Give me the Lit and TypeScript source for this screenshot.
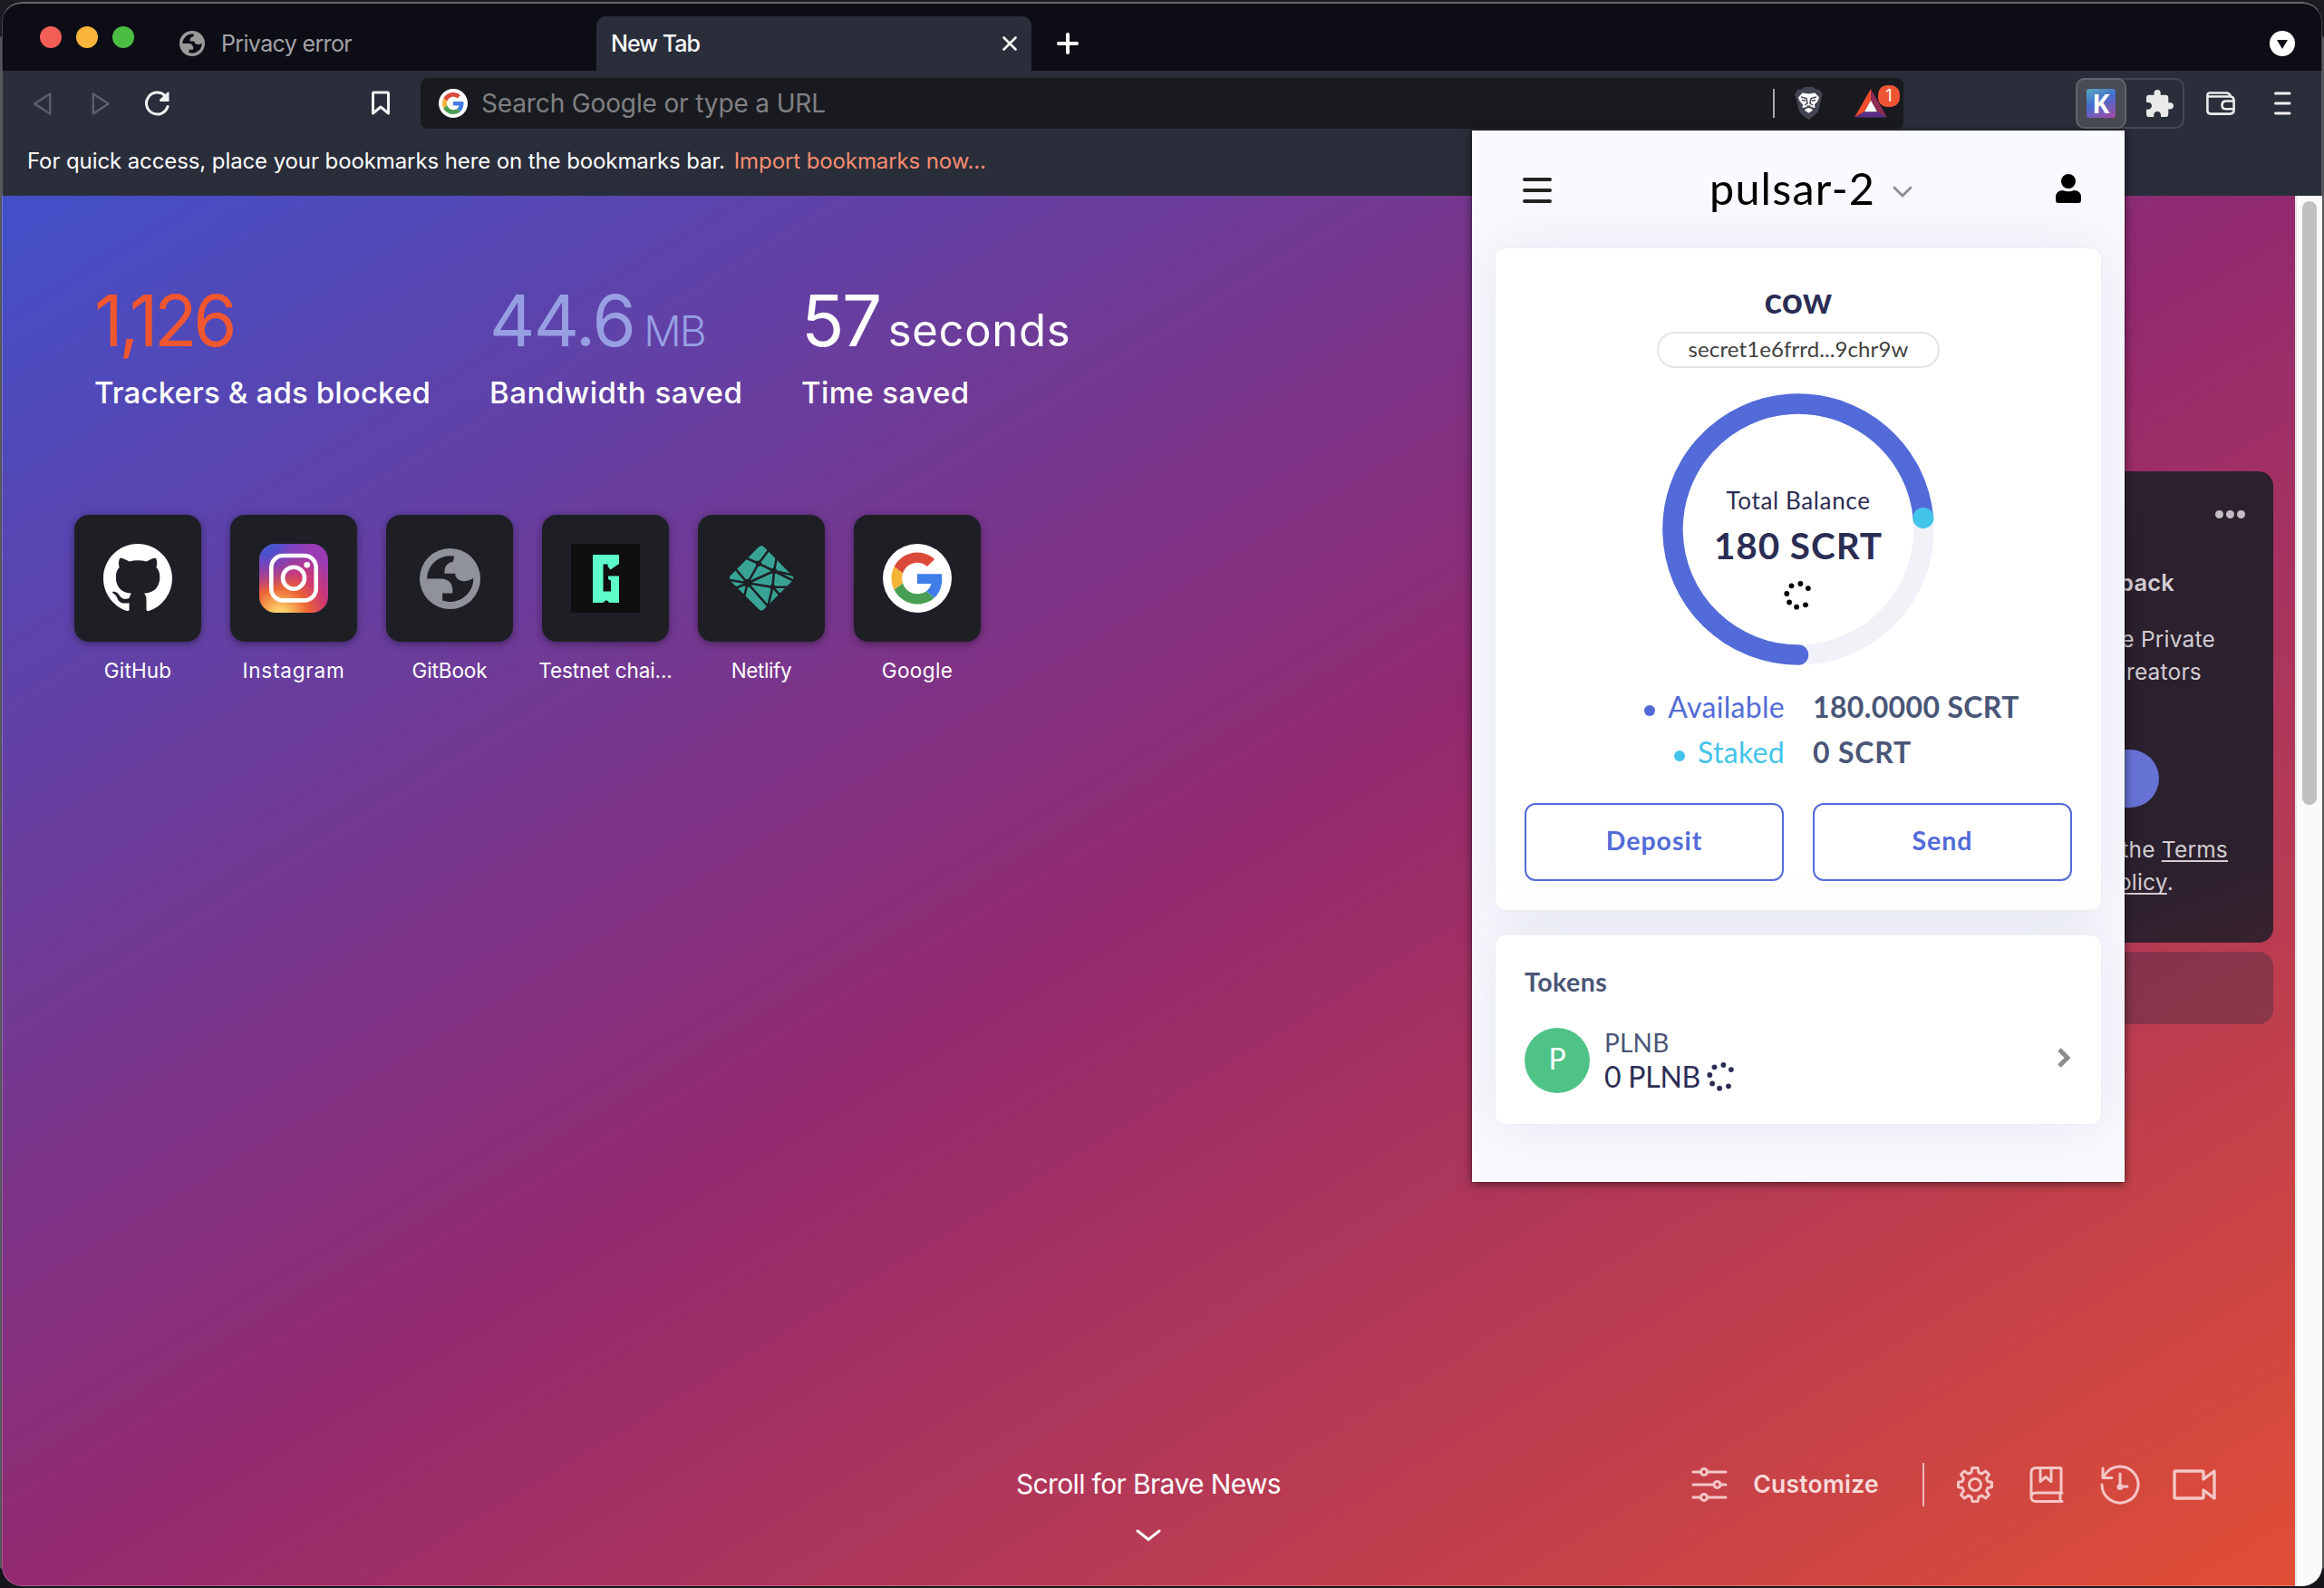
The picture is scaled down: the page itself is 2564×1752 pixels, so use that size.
import { LitElement, html, css, svg, nothing } from "lit";
import { customElement, property } from "lit/decorators.js";

const GITHUB =
  "M8 0C3.58 0 0 3.58 0 8c0 3.54 2.29 6.53 5.47 7.59.4.07.55-.17.55-.38 0-.19-.01-.82-.01-1.49-2.01.37-2.53-.49-2.69-.94-.09-.23-.48-.94-.82-1.13-.28-.15-.68-.52-.01-.53.63-.01 1.08.58 1.23.82.72 1.21 1.87.87 2.33.66.07-.52.28-.87.51-1.07-1.78-.2-3.64-.89-3.64-3.95 0-.87.31-1.59.82-2.15-.08-.2-.36-1.02.08-2.12 0 0 .67-.21 2.2.82.64-.18 1.32-.27 2-.27.68 0 1.36.09 2 .27 1.53-1.04 2.2-.82 2.2-.82.44 1.1.16 1.92.08 2.12.51.56.82 1.27.82 2.15 0 3.07-1.87 3.75-3.65 3.95.29.25.54.73.54 1.48 0 1.07-.01 1.93-.01 2.2 0 .21.15.46.55.38A8.013 8.013 0 0016 8c0-4.42-3.58-8-8-8z";

const globe = (size: number, fill: string) => html`<svg width=${size} height=${size} viewBox="0 0 200 200">
  <path fill=${fill} fill-rule="evenodd" d="M100 0a100 100 0 1 0 0 200a100 100 0 1 0 0-200z
    M24 100A76 76 0 0 1 114 26L110 44C95 45 82 58 82 74V83H117C117 98 130 108 147 108C160 108 170 103 177 98A77 77 0 0 1 75 172V148H108C112 120 98 100 70 100Z"/></svg>`;

const google = (size: number) => html`<svg width=${size} height=${size} viewBox="-8 -8 64 64">
  <circle cx="24" cy="24" r="32" fill="#fff"/>
  <path fill="#db4a39" d="M24 9.5c3.54 0 6.71 1.22 9.21 3.6l6.85-6.85C35.9 2.38 30.47 0 24 0 14.62 0 6.51 5.38 2.56 13.22l7.98 6.19C12.43 13.72 17.74 9.5 24 9.5z"/>
  <path fill="#3f7ee8" d="M46.98 24.55c0-1.57-.15-3.09-.38-4.55H24v9.02h12.94c-.58 2.96-2.26 5.48-4.78 7.18l7.73 6c4.51-4.18 7.09-10.36 7.09-17.65z"/>
  <path fill="#f5b433" d="M10.53 28.59c-.48-1.45-.76-2.99-.76-4.59s.27-3.14.76-4.59l-7.98-6.19C.92 16.46 0 20.12 0 24c0 3.88.92 7.54 2.56 10.78l7.97-6.19z"/>
  <path fill="#489f53" d="M24 48c6.48 0 11.93-2.13 15.89-5.81l-7.73-6c-2.15 1.45-4.92 2.3-8.16 2.3-6.26 0-11.57-4.22-13.47-9.91l-7.98 6.19C6.51 42.62 14.62 48 24 48z"/></svg>`;

const SPIN: [number, number][] = [[2.4, -13], [10.9, -7.9], [-12.7, -2], [-7.5, -10.7], [-9.9, 7.5], [-1.9, 12.7], [8, 10.3]];
const spinner = (fill: string) => html`<svg width="32" height="32" viewBox="-16 -16 32 32" fill=${fill}>
  ${SPIN.map(([x, y]) => svg`<circle cx=${x} cy=${y} r="2.9"/>`)}</svg>`;

const siteIcons: Record<string, unknown> = {
  github: html`<svg width="76" height="76" viewBox="0 0 16 16"><path fill="#fff" d=${GITHUB}/></svg>`,
  instagram: html`<svg width="76" height="76" viewBox="0 0 76 76">
    <defs>
      <radialGradient id="warm" cx=".3" cy="1.05" r="1"><stop offset="0" stop-color="#fddc78"/><stop offset=".12" stop-color="#fcc964"/><stop offset=".42" stop-color="#ee6335"/><stop offset=".68" stop-color="#cd3774"/><stop offset="1" stop-color="#9a3cb4"/></radialGradient>
      <radialGradient id="cool" cx="0.05" cy="-.05" r=".75"><stop offset="0" stop-color="#3867d6"/><stop offset=".3" stop-color="#4f4fcb"/><stop offset="1" stop-color="#8a3cbe" stop-opacity="0"/></radialGradient>
    </defs>
    <rect width="76" height="76" rx="18" fill="url(#warm)"/><rect width="76" height="76" rx="18" fill="url(#cool)"/>
    <g fill="none" stroke="#fff" stroke-width="4.6"><rect x="13.3" y="13" width="49.4" height="49.4" rx="13"/><circle cx="38" cy="37.7" r="12"/></g>
    <circle cx="52.7" cy="23.3" r="3.3" fill="#fff"/></svg>`,
  globe: globe(67, "#8f9399"),
  testnet: html`<svg width="76" height="76" viewBox="0 0 76 76"><rect width="76" height="76" fill="#0f0f10"/>
    <path fill="#5cfdc8" d="M24 12H53V22L43.4 28.5L40.6 25V22.5H35.5V52.5H44V40.5L41 39V35.5H53V65H42.5L39 62L35 65H24Z"/></svg>`,
  netlify: html`<svg width="76" height="76" viewBox="0 0 76 76"><path fill="#38a395" d="M38 2Q40 2 42 4.500L72 35Q74.500 38 72 41L41 72Q38 75 35 72L4 41Q1.500 38 4 35L34 4.500Q36 2 38 2Z"/>
    <g stroke="#1e1f25" stroke-width="2.600" fill="none"><path d="M22.8 43.3L34.900 21.700L52 30ZL50.400 47.700L52 30M34.900 21.700L22 16M34.900 21.700L46 7M52 30L55 14M52 30L76 35M50.400 47.700L70 47.700M50.400 47.700L45 70M50.400 47.700L60 58M22.800 43.300L0 39.500M22.800 43.300L8 26M22.800 43.300L48 72M22.800 43.300L7 50M22.800 43.300L18 62M52 30L76 42"/></g>
    <circle cx="22.800" cy="43.300" r="4.600" fill="#1e1f25"/><circle cx="34.900" cy="21.700" r="3.200" fill="#1e1f25"/><circle cx="52" cy="30" r="3.200" fill="#1e1f25"/><circle cx="50.400" cy="47.700" r="3" fill="#1e1f25"/></svg>`,
  google: google(76),
};

@customElement("tab-strip")
class TabStrip extends LitElement {
  static styles = css`
    :host { display: flex; height: 76px; background: #0d0d16; padding: 0 30px 0 42px; box-sizing: border-box; font-family: Inter, "Liberation Sans", sans-serif; }
    .lights { display: flex; gap: 16px; padding-top: 27px; }
    .light { width: 24px; height: 24px; border-radius: 50%; }
    .red { background: #f35f57; }
    .amber { background: #f9b43c; }
    .green { background: #4bbd43; }
    .tab { display: flex; align-items: center; font-size: 25px; line-height: 30px; box-sizing: border-box; margin-top: 16px; height: 60px; white-space: nowrap; }
    .idle { width: 460px; margin-left: 50px; gap: 18px; color: #a2a2a6; letter-spacing: -.65px; }
    .active { width: 480px; background: #2a2d3a; border-radius: 10px 10px 0 0; padding: 0 16px; justify-content: space-between; color: #f7f7f8; font-weight: 500; letter-spacing: -.96px; }
    .label { margin-top: -1px; }
    .plus { margin: 34px 0 0 28px; }
    .search { margin: 32px 0 0 auto; }
    svg { display: block; flex: none; }
  `;
  render() {
    return html`
      <div class="lights"><span class="light red"></span><span class="light amber"></span><span class="light green"></span></div>
      <div class="tab idle">${globe(28, "#9a9a9a")}<span class="label">Privacy error</span></div>
      <div class="tab active"><span class="label">New Tab</span>
        <svg width="16" height="16" viewBox="0 0 16 16"><path d="M1.500 1.500L14.500 14.500M14.500 1.500L1.500 14.500" stroke="#f5f5f5" stroke-width="2.600" stroke-linecap="round"/></svg></div>
      <svg class="plus" width="24" height="24" viewBox="0 0 24 24"><path d="M12 2V22M2 12H22" stroke="#fff" stroke-width="4" stroke-linecap="round"/></svg>
      <svg class="search" width="28" height="28" viewBox="0 0 28 28"><circle cx="14" cy="14" r="14" fill="#fff"/><path d="M8 10H20L14 20Z" fill="#0d0d16"/></svg>`;
  }
}

@customElement("tool-bar")
class ToolBar extends LitElement {
  static styles = css`
    :host { display: flex; align-items: center; height: 72px; background: #2a2d3a; padding-left: 34px; box-sizing: border-box; font-family: Inter, "Liberation Sans", sans-serif; }
    svg { display: block; flex: none; }
    .fwd { margin-left: 44px; }
    .reload { margin-left: 39px; }
    .mark { margin-left: 222px; }
    .address { display: flex; align-items: center; box-sizing: border-box; width: 1636px; height: 56px; margin-left: 34px; padding: 0 4px 0 20px; border-radius: 8px; background: #191a1f; }
    .hint { flex: 1; margin-left: 15px; font-size: 28px; line-height: 34px; letter-spacing: -.14px; color: #808083; }
    .rule { width: 2px; height: 32px; background: #a9a9ac; margin-right: 22px; }
    .rewards { position: relative; margin-left: 35px; width: 50px; height: 32px; }
    .badge { position: absolute; left: 26px; top: -4px; width: 24px; height: 24px; border-radius: 10px; background: #ef5533; color: #fff; font-size: 18px; line-height: 24px; text-align: center; }
    .exts { display: flex; box-sizing: border-box; width: 120px; height: 56px; margin-left: 190px; border: 2px solid #454854; border-radius: 10px; }
    .keplr { display: flex; align-items: center; justify-content: center; width: 56px; height: 56px; margin: -2px; box-sizing: border-box; border: 2px solid #62646d; border-radius: 10px; background: #484b54; }
    .k { width: 32px; height: 32px; border-radius: 3px; background: linear-gradient(155deg, #56a3c2 5%, #456bcc 45%, #a748a4 100%); color: #fff; font: 700 29px/32px "Noto Sans", sans-serif; text-align: center; }
    .puzzle { margin: 11px 0 0 24px; }
    .wallet { margin-left: 24px; }
    .menu { margin-left: 43px; }
  `;
  render() {
    return html`
      <svg width="21" height="27" viewBox="0 0 21 27"><path d="M19.200 2.500V24.500L2 13.500Z" fill="none" stroke="#5d606a" stroke-width="2.400" stroke-linejoin="round"/></svg>
      <svg class="fwd" width="20" height="27" viewBox="0 0 20 27"><path d="M1.800 2.500V24.500L18.500 13.500Z" fill="none" stroke="#5d606a" stroke-width="2.400" stroke-linejoin="round"/></svg>
      <svg class="reload" width="28" height="28" viewBox="0 0 28 28"><path d="M25 17.500A12 12 0 1 1 22 5.500" fill="none" stroke="#f2f2f2" stroke-width="3" stroke-linecap="round"/><path d="M26.500 2.500V12H17Q15 11 17 9L24.500 2Q26.500 1 26.500 2.500Z" fill="#f2f2f2"/></svg>
      <svg class="mark" width="20" height="28" viewBox="0 0 20 28"><path d="M1.500 3Q1.500 2 2.500 2H17.500Q18.500 2 18.500 3V25L10 18L1.500 25Z" fill="none" stroke="#f2f2f2" stroke-width="3" stroke-linejoin="round"/></svg>
      <div class="address">${google(32)}<span class="hint">Search Google or type a URL</span><span class="rule"></span>
        <svg width="31" height="36" viewBox="0 0 31 36"><path fill="#434552" d="M8 2L12 0H20L23.500 2.500L27.500 3L31 8L29.500 12L26.800 24Q26 28 22 31L15.500 36L9 31Q5 28 4.200 24L1.500 12L0 8L3.500 3L7.500 2.500Z"/>
          <path fill="#fff" d="M8.500 6.500L15.500 7.500L22.500 6.500L27 11.500L25.500 15.500L21.500 20L22 23L15.500 19.500L9 23L9.500 20L5.500 15.500L4 11.500Z"/>
          <path fill="#fff" d="M9 20L15.500 17L22 20L22.500 23L18 22L15.500 20.500L13 22L8.500 23ZM11.500 24.500L15.500 22.800L19.500 24.500V26L15.500 28.800L11.500 26Z"/>
          <path fill="none" stroke="#434552" stroke-width="1.500" d="M7 11L13 12.500L14 18L11 20M24 11L18 12.500L17 18L20 20M13.500 20.500L15.500 22L17.500 20.500M8 14.500L12 15M23 14.500L19 15"/></svg>
        <span class="rewards">
          <svg width="36" height="32" viewBox="0 0 36 32"><path fill="#f04e2c" d="M18 0L0 31.500L11 25.300L18 12.700Z"/><path fill="#8f2b55" d="M18 0L36 31.500L25 25.300L18 12.700Z"/><path fill="#5a2e88" d="M0 31.500H36L25 25.300H11Z"/><path fill="#fff" d="M18 12.700L11 25.300H25Z"/></svg>
          <span class="badge">1</span></span>
      </div>
      <div class="exts"><span class="keplr"><span class="k">K</span></span>
        <svg class="puzzle" width="30" height="30" viewBox="2 1 21 21"><path fill="#e9e9ea" d="M20.500 11H19V7c0-1.100-.9-2-2-2h-4V3.500a2.500 2.500 0 0 0-5 0V5H4c-1.100 0-2 .9-2 2v3.800h1.500c1.500 0 2.700 1.200 2.700 2.700S5 16.200 3.500 16.200H2V20c0 1.100.9 2 2 2h3.800v-1.500c0-1.500 1.200-2.700 2.700-2.700s2.700 1.200 2.700 2.700V22H17c1.100 0 2-.9 2-2v-4h1.500a2.500 2.500 0 0 0 0-5z"/></svg></div>
      <svg class="wallet" width="32" height="26" viewBox="0 0 32 26" fill="none" stroke="#ececec" stroke-width="2.600" stroke-linejoin="round"><path d="M26.500 5.500V4Q25 1.500 22 1.500H4Q1.400 1.500 1.400 4V21Q1.400 24.600 5 24.600H26Q30.600 24.600 30.600 20.500V10Q30.600 5.500 26 5.500H2"/><path d="M30.600 10.500H21Q17.500 11 17.500 15Q17.500 19 21 19.300H30.600"/></svg>
      <svg class="menu" width="19" height="26" viewBox="0 0 19 26"><path d="M1.500 2H17M1.500 13H17M1.500 24H17" stroke="#f2f2f2" stroke-width="3" stroke-linecap="round"/></svg>`;
  }
}

interface Stat { value: string; unit?: string; label: string; tone: string }
const STATS: Stat[] = [
  { value: "1,126", label: "Trackers & ads blocked", tone: "orange" },
  { value: "44.6", unit: "MB", label: "Bandwidth saved", tone: "lilac" },
  { value: "57", unit: "seconds", label: "Time saved", tone: "white" },
];
const SITES = [
  ["github", "GitHub"], ["instagram", "Instagram"], ["globe", "GitBook"],
  ["testnet", "Testnet chai..."], ["netlify", "Netlify"], ["google", "Google"],
];

@customElement("start-page")
class StartPage extends LitElement {
  static styles = css`
    :host { display: flex; flex-direction: column; box-sizing: border-box; padding: 90px 24px 0 80px; color: #fff; font-family: Inter, "Liberation Sans", sans-serif; background: linear-gradient(to bottom right, #4250c9 0%, #92296f 50%, #e04e35 100%); }
    svg { display: block; flex: none; }
    .body { display: flex; justify-content: space-between; flex: 1; }
    .stats { display: flex; margin-left: 22px; }
    .stat { white-space: nowrap; }
    .orange { width: 436px; }
    .lilac { width: 344px; }
    .value { display: flex; align-items: baseline; font-size: 78px; line-height: 96px; height: 96px; }
    .unit { font-size: 46px; }
    .orange .value { color: #f0562f; letter-spacing: -4.400px; }
    .lilac .value { color: #979fe2; letter-spacing: -1.700px; }
    .white .value { letter-spacing: -2.400px; }
    .lilac .unit { font-weight: 300; letter-spacing: -2px; margin-left: 10px; }
    .white .unit { font-size: 49px; letter-spacing: .700px; margin-left: 9px; }
    .label { margin-top: 11px; font-size: 33px; font-weight: 500; line-height: 40px; }
    .orange .label { letter-spacing: .150px; }
    .lilac .label { letter-spacing: .540px; }
    .white .label { letter-spacing: .400px; }
    .sites { display: flex; gap: 32px; margin-top: 115px; }
    .site { width: 140px; display: flex; flex-direction: column; align-items: center; }
    .tile { width: 140px; height: 140px; border-radius: 16px; background: #1e1f25; display: flex; align-items: center; justify-content: center; box-shadow: 0 2px 8px rgba(0, 0, 0, .4); }
    .name { margin-top: 17px; font-size: 22.500px; line-height: 30px; white-space: nowrap; letter-spacing: .150px; }
    .n1 { letter-spacing: .8px; }
    .n2, .n3 { letter-spacing: -.1px; }
    .n4 { letter-spacing: -.4px; }
    .n5 { letter-spacing: .4px; }
    .aside { width: 560px; margin-top: 214px; }
    .rewards { box-sizing: border-box; height: 520px; border-radius: 16px; background: linear-gradient(160deg, #38213a 0%, #2b202e 30%, #2b202e 80%, #38222e 100%); color: #d2cdd2; display: flex; flex-direction: column; align-items: flex-end; font-size: 24.500px; line-height: 36px; letter-spacing: .200px; white-space: nowrap; }
    .more { display: flex; gap: 3px; margin: 43px 31px 0 0; }
    .more i { width: 9px; height: 9px; border-radius: 50%; background: #c3bcc3; }
    .head { font-size: 25.500px; font-weight: 600; letter-spacing: .2px; margin: 53px 109px 0 0; }
    .p1 { margin: 26px 64px 0 0; }
    .p2 { margin: 0 79px 0 0; }
    .pill { width: 300px; height: 64px; border-radius: 32px; background: #6672d4; margin: 68px 126px 0 0; }
    .p3 { margin: 28px 50px 0 0; }
    .p4 { margin: 0 110px 0 0; }
    u { text-decoration-thickness: 2px; text-underline-offset: 3px; text-decoration-skip-ink: none; }
    .strip { height: 80px; margin-top: 10px; border-radius: 16px; background: rgba(40, 40, 64, .35); }
    .foot { display: grid; grid-template-columns: 1fr auto 1fr; height: 152px; margin-left: -80px; margin-right: -24px; }
    .news { grid-column: 2; display: flex; flex-direction: column; align-items: center; font-size: 30px; line-height: 38px; letter-spacing: -.640px; padding-top: 20px; }
    .news svg { margin-top: 31px; }
    .tools { display: flex; align-items: center; justify-content: flex-end; height: 80px; padding-right: 87px; color: #f4c6c6; }
    .custom { font-size: 26.500px; font-weight: 600; letter-spacing: .250px; color: #f7dada; margin: -2px 48px 0 28px; }
    .bar { width: 2px; height: 48px; background: #efb9b9; margin-right: 36px; }
    .g { margin-right: 40px; }
    .h { margin-right: 36px; }
  `;
  render() {
    return html`
      <div class="body">
        <div>
          <div class="stats">${STATS.map((s) => html`<div class="stat ${s.tone}">
            <div class="value">${s.value}${s.unit ? html`<span class="unit">${s.unit}</span>` : nothing}</div>
            <div class="label">${s.label}</div></div>`)}</div>
          <div class="sites">${SITES.map(([icon, name], i) => html`<div class="site">
            <div class="tile">${siteIcons[icon]}</div><div class="name n${i}">${name}</div></div>`)}</div>
        </div>
        <div class="aside">
          <div class="rewards">
            <div class="more"><i></i><i></i><i></i></div>
            <div class="head">back</div>
            <div class="p1">e Private</div>
            <div class="p2">reators</div>
            <div class="pill"></div>
            <div class="p3">the <u>Terms</u></div>
            <div class="p4"><u>olicy</u>.</div>
          </div>
          <div class="strip"></div>
        </div>
      </div>
      <div class="foot">
        <div class="news">Scroll for Brave News
          <svg width="28" height="14" viewBox="0 0 28 14"><path d="M2 2L14 11.500L26 2" fill="none" stroke="#fff" stroke-width="3" stroke-linecap="round"/></svg></div>
        <div class="tools">
          <svg width="40" height="38" viewBox="0 0 40 38" fill="none" stroke="currentColor" stroke-width="3" stroke-linecap="round"><path d="M2 5H10.500M17.500 5H38M2 19H25M32 19H38M2 33H10.500M17.500 33H38"/><circle cx="14" cy="5" r="3.500"/><circle cx="28.500" cy="19" r="3.500"/><circle cx="14" cy="33" r="3.500"/></svg>
          <span class="custom">Customize</span><span class="bar"></span>
          <svg class="g" width="40" height="40" viewBox="-20 -20 40 40" fill="none" stroke="currentColor" stroke-width="3" stroke-linejoin="round"><circle r="6.500"/>
            <path d="M-3 -18.500H3L4 -13.500L7.500 -12L11.800 -15L15.500 -11.200L12.500 -7L14 -3.500L18.500 -2.800V2.800L14 3.500L12.500 7L15.500 11.200L11.800 15L7.500 12L4 13.500L3 18.500H-3L-4 13.500L-7.500 12L-11.800 15L-15.500 11.200L-12.500 7L-14 3.500L-18.500 2.800V-2.800L-14 -3.500L-12.500 -7L-15.500 -11.200L-11.800 -15L-7.500 -12L-4 -13.500Z"/></svg>
          <svg class="g" width="38" height="40" viewBox="0 0 38 40" fill="none" stroke="currentColor" stroke-width="3" stroke-linejoin="round" stroke-linecap="round"><path d="M35 29V3Q35 1.500 33.500 1.500H7Q2 1.500 2 6.500V33M36 29H7Q2 29 2 33.500Q2 38.500 7 38.500H36M34 29V38.500M12 2V16.500L18 11.500L24 16.500V2"/></svg>
          <svg class="h" width="44" height="44" viewBox="0 0 44 44" fill="none" stroke="currentColor" stroke-width="3" stroke-linejoin="round" stroke-linecap="round"><path d="M2 22A20 20 0 1 0 5 11.500M3 4V14.500H13M22 10V24.500M21 24H30"/><circle cx="22" cy="24.500" r="2" fill="currentColor"/></svg>
          <svg width="48" height="34" viewBox="0 0 48 34" fill="none" stroke="currentColor" stroke-width="3.400" stroke-linejoin="round"><path d="M34 11V3.500Q34 2 32.500 2H3.500Q2 2 2 3.500V30.500Q2 32 3.500 32H32.500Q34 32 34 30.500V23L46 32V2Z"/></svg>
        </div>
      </div>`;
  }
}

@customElement("wallet-popup")
class WalletPopup extends LitElement {
  @property() network = "pulsar-2";
  static styles = css`
    :host { display: block; box-sizing: border-box; width: 720px; height: 1160px; overflow: hidden; background: #f9faff; font-family: Lato, "Liberation Sans", sans-serif; color: #2b2d54; }
    svg { display: block; flex: none; }
    .header { display: flex; align-items: center; height: 129px; box-sizing: border-box; padding: 2px 48px 0 56px; }
    .title { font-size: 48.500px; line-height: 60px; color: #000; letter-spacing: 1.200px; margin: -6px 19px 0 174px; }
    .down { margin-top: 4px; }
    .person { margin: -3px 0 0 auto; }
    .card { box-sizing: border-box; margin: 0 25px; padding: 32px; border: 1px solid #eff0f2; border-radius: 12px; background: #fff; box-shadow: 0 0 64px rgba(136, 152, 170, .18); }
    .name { text-align: center; font-size: 40.500px; font-weight: 700; line-height: 50px; letter-spacing: .1px; }
    .address { box-sizing: border-box; width: 312px; height: 40px; margin: 10px auto 0; border: 2px solid #e4e4e4; border-radius: 20px; font-size: 24px; line-height: 34px; text-align: center; color: #404040; letter-spacing: .1px; }
    .ring { display: grid; justify-content: center; margin-top: 28px; }
    .ring > * { grid-area: 1 / 1; }
    .total { display: flex; flex-direction: column; align-items: center; padding-top: 100px; }
    .cap { font-size: 26px; line-height: 36px; letter-spacing: .640px; }
    .sum { font-size: 40.500px; font-weight: 700; line-height: 50px; letter-spacing: .900px; margin: 7px 0 14px; }
    .grid { display: grid; grid-template-columns: 1fr 1fr; column-gap: 32px; margin-top: 21px; font-size: 32px; line-height: 50px; }
    .key { display: flex; justify-content: flex-end; align-items: center; gap: 14px; letter-spacing: .3px; margin-right: -1px; }
    .key i { width: 12px; height: 12px; border-radius: 50%; background: currentColor; margin-top: 8px; }
    .blue { color: #526bd8; }
    .cyan { color: #43c5ea; }
    .val { font-weight: 700; color: #4a5677; letter-spacing: .350px; }
    .zero { letter-spacing: .800px; }
    .btn { box-sizing: border-box; height: 86px; margin-top: 31px; border: 2px solid #526bd8; border-radius: 12px; background: #fff; color: #526bd8; font: 700 28.500px/79px Lato, sans-serif; letter-spacing: 1px; text-align: center; }
    .tokens { margin-top: 26px; height: 210px; padding-top: 31px; }
    .heading { font-size: 28.500px; font-weight: 700; line-height: 40px; letter-spacing: .500px; color: #4a5677; }
    .token { display: flex; align-items: center; margin-top: 31px; height: 72px; }
    .avatar { width: 72px; height: 72px; border-radius: 50%; background: #4fc387; color: #fff; font-size: 32px; line-height: 67px; text-align: center; }
    .info { margin: -3px 0 0 16px; line-height: 38px; }
    .sym { font-size: 28px; color: #4a5677; letter-spacing: .2px; }
    .amt { display: flex; align-items: center; gap: 7px; font-size: 32px; letter-spacing: -.250px; }
    .go { margin: -7px 2px 0 auto; }
  `;
  render() {
    return html`
      <div class="header">
        <svg width="32" height="28" viewBox="0 0 32 28"><path d="M2 2H30M2 14H30M2 26H30" stroke="#242424" stroke-width="4" stroke-linecap="round"/></svg>
        <span class="title">${this.network}</span>
        <svg class="down" width="22" height="13" viewBox="0 0 22 13"><path d="M2 2L11 11L20 2" fill="none" stroke="#8b8b8f" stroke-width="2.800" stroke-linecap="round"/></svg>
        <svg class="person" width="28" height="32" viewBox="0 0 28 32"><circle cx="14" cy="8" r="8"/><path d="M8 18Q14 20.500 20 18Q28 18 28 26V29Q28 32 25 32H3Q0 32 0 29V26Q0 18 8 18Z"/></svg>
      </div>
      <section class="card">
        <div class="name">cow</div>
        <div class="address">secret1e6frrd...9chr9w</div>
        <div class="ring">
          <svg width="300" height="300" viewBox="-150 -150 300 300" fill="none" stroke-width="22.500" stroke-linecap="round">
            <circle r="138.500" stroke="#f1f2f7"/>
            <path d="M0 138.500A138.500 138.500 0 1 1 137.900 -12.600" stroke="#526bd8"/>
            <circle cx="137.900" cy="-12.600" r="11.500" fill="#43c5ea" stroke="none"/></svg>
          <div class="total"><div class="cap">Total Balance</div><div class="sum">180 SCRT</div>${spinner("#000")}</div>
        </div>
        <div class="grid">
          <div class="key blue"><i></i>Available</div><div class="val">180.0000 SCRT</div>
          <div class="key cyan"><i></i>Staked</div><div class="val zero">0 SCRT</div>
          <div class="btn">Deposit</div><div class="btn">Send</div>
        </div>
      </section>
      <section class="card tokens">
        <div class="heading">Tokens</div>
        <div class="token"><div class="avatar">P</div>
          <div class="info"><div class="sym">PLNB</div><div class="amt">0 PLNB${spinner("#2b2d54")}</div></div>
          <svg class="go" width="15" height="24" viewBox="0 0 15 24"><path d="M3 3L12 12L3 21" fill="none" stroke="#8c8c8c" stroke-width="5"/></svg></div>
      </section>`;
  }
}

@customElement("app-root")
class AppRoot extends LitElement {
  static styles = css`
    :host { display: block; box-sizing: border-box; width: 2564px; height: 1752px; padding: 2px; overflow: hidden; background: linear-gradient(#1b1c22 0 40px, #55565a 41px 1730px, #14161a 1731px); }
    .window { position: relative; display: flex; flex-direction: column; width: 2560px; height: 1748px; border-radius: 22px; overflow: hidden; background: #2a2d3a; }
    .window::after { content: ""; position: absolute; inset: 0; border: 1px solid rgba(255, 255, 255, .22); border-top: 2px solid #66666a; border-radius: 22px; pointer-events: none; }
    .bookmarks { height: 66px; box-sizing: border-box; padding: 12px 28px 0; color: #fff; font: 400 24px/32px Inter, "Liberation Sans", sans-serif; letter-spacing: -.1px; white-space: nowrap; }
    .import { color: #f68d72; margin-left: 10px; }
    .view { display: flex; flex: 1; }
    start-page { flex: 1; }
    .scroll { width: 30px; box-sizing: border-box; border-left: 2px solid #e6e4e6; background: #fafafa; padding: 6px 0 0 6px; }
    .thumb { width: 16px; height: 666px; border-radius: 8px; background: #c0c0c0; }
    .popup { position: absolute; left: 1622px; top: 142px; box-shadow: 0 2px 10px rgba(0, 0, 0, .55), 0 0 1px rgba(0, 0, 0, .8); }
  `;
  render() {
    return html`<div class="window">
      <tab-strip></tab-strip>
      <tool-bar></tool-bar>
      <div class="bookmarks"><span>For quick access, place your bookmarks here on the bookmarks bar.</span><span class="import">Import bookmarks now...</span></div>
      <div class="view"><start-page></start-page><div class="scroll"><div class="thumb"></div></div></div>
      <wallet-popup class="popup"></wallet-popup>
    </div>`;
  }
}
